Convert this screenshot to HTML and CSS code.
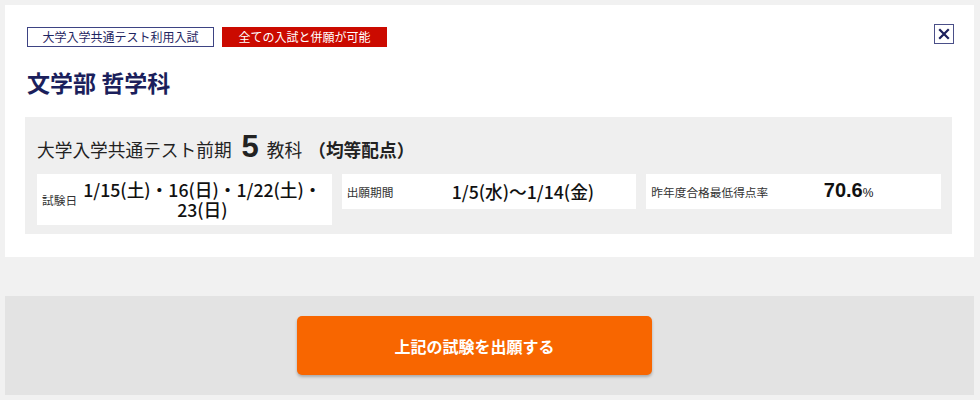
FILE: index.html
```html
<!DOCTYPE html>
<html lang="ja">
<head>
<meta charset="utf-8">
<link rel="stylesheet" href="styles.css">
</head>
<body>
<div class="page">
  <section class="card">
    <div class="card-head">
      <div class="tags">
        <span class="tag tag-outline">大学入学共通テスト利用入試</span>
        <span class="tag tag-red">全ての入試と併願が可能</span>
      </div>
      <button class="close" aria-label="閉じる">
        <svg width="12" height="12" viewBox="0 0 12 12"><path d="M2 2 L10 10 M10 2 L2 10" stroke="#1b1f5c" stroke-width="2.2" stroke-linecap="square"/></svg>
      </button>
    </div>
    <h1 class="title">文学部 哲学科</h1>
    <div class="exam">
      <p class="exam-head">大学入学共通テスト前期<span class="num">5</span>教科<b class="note">（均等配点）</b></p>
      <div class="cells">
        <div class="cell">
          <span class="label">試験日</span>
          <span class="value">1/15(土)・16(日)・1/22(土)・23(日)</span>
        </div>
        <div class="cell">
          <span class="label">出願期間</span>
          <span class="value value-shift">1/5(水)〜1/14(金)</span>
        </div>
        <div class="cell">
          <span class="label">昨年度合格最低得点率</span>
          <span class="value score">70.6<small>%</small></span>
        </div>
      </div>
    </div>
  </section>
  <div class="action">
    <button class="apply">上記の試験を出願する</button>
  </div>
</div>
</body>
</html>
```
FILE: styles.css
```css
html, body {
  margin: 0;
  padding: 0;
  background: #f1f1f1;
}
body {
  font-family: "Noto Sans CJK JP", "Noto Sans", sans-serif;
  color: #222;
}
.page {
  padding: 5px 6px 5px 5px;
  width: 969px;
}
.card {
  background: #fff;
  padding: 22px 22px 23px 20px;
}
.card-head {
  display: flex;
  justify-content: space-between;
  align-items: flex-start;
  height: 20px;
}
.tags {
  display: flex;
  gap: 8px;
  margin-left: 2px;
}
.tag {
  display: block;
  box-sizing: border-box;
  height: 20px;
  line-height: 18px;
  font-size: 12px;
  text-align: center;
}
.tag-outline {
  width: 187px;
  border: 1px solid #3d4383;
  color: #1f2562;
}
.tag-red {
  width: 165px;
  border: 1px solid #cb0a00;
  background: #cb0a00;
  color: #fff;
}
.close {
  box-sizing: border-box;
  width: 20px;
  height: 20px;
  margin: -3px -2px 0 0;
  padding: 0;
  border: 1.5px solid #4a4f88;
  background: #fff;
  display: flex;
  align-items: center;
  justify-content: center;
}
.title {
  margin: 20px 0 20px 2px;
  height: 30px;
  font-size: 23px;
  line-height: 30px;
  font-weight: 700;
  color: #1b1f5c;
}
.exam {
  background: #efefef;
  padding: 12px 11px 9px 12px;
}
.exam-head {
  margin: 0 0 9px;
  height: 36px;
  display: flex;
  align-items: baseline;
  font-size: 17.7px;
  line-height: 36px;
  color: #222;
  white-space: nowrap;
}
.num {
  font-family: "Liberation Sans", Arial, sans-serif;
  font-weight: 700;
  font-size: 31px;
  line-height: 36px;
  margin: 0 8px 0 10px;
}
.note {
  font-weight: 700;
  margin-left: 6px;
}
.cells {
  display: flex;
  align-items: flex-start;
  gap: 10px;
}
.cell {
  flex: 1;
  min-height: 35px;
  box-sizing: border-box;
  background: #fff;
  padding: 5px 8px 6px 5px;
  display: flex;
  align-items: center;
}
.label {
  font-size: 11.7px;
  color: #333;
  white-space: nowrap;
  margin-right: 4px;
}
.value {
  flex: 1;
  text-align: center;
  font-size: 17.7px;
  line-height: 20px;
  font-weight: 500;
  color: #111;
}
.value-shift {
  padding-left: 20px;
}
.score {
  font-family: "Liberation Sans", Arial, sans-serif;
  font-weight: 700;
  font-size: 20px;
  padding-right: 8px;
}
.score small {
  font-weight: 400;
  font-size: 12px;
}
.action {
  margin-top: 39px;
  background: #e3e3e3;
  height: 99px;
  padding: 20px 30px 20px 0;
  box-sizing: border-box;
  display: flex;
  justify-content: center;
}
.apply {
  width: 355px;
  height: 59px;
  border: 0;
  border-radius: 5px;
  background: #f86600;
  color: #fff;
  font-family: "Noto Sans CJK JP", "Noto Sans", sans-serif;
  font-size: 16px;
  font-weight: 700;
  box-shadow: 0 2px 3px rgba(0, 0, 0, 0.25);
}
```
